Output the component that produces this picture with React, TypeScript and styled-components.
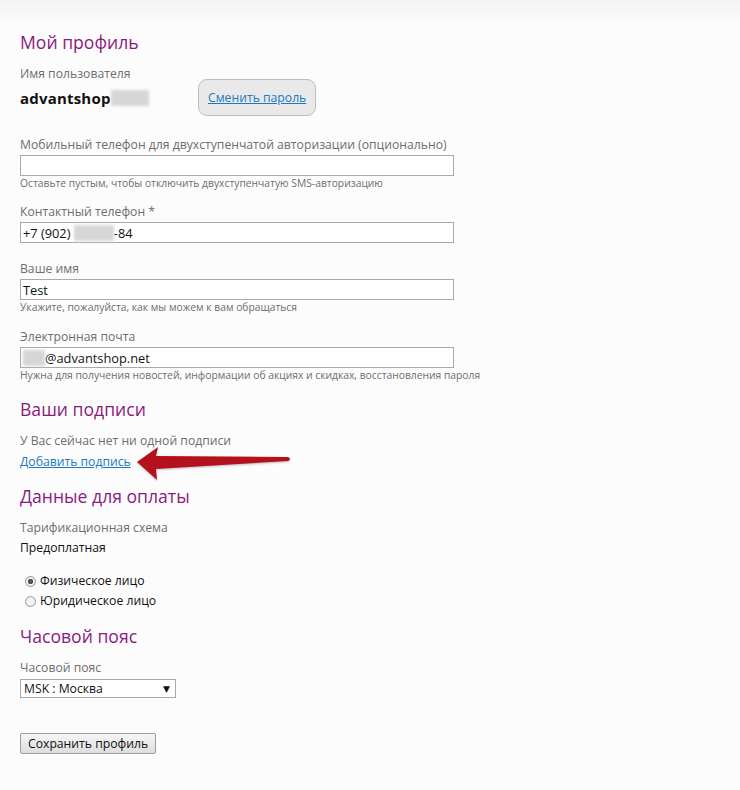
import React from 'react';
import styled, { createGlobalStyle } from 'styled-components';

const GlobalStyle = createGlobalStyle`
  html, body {
    margin: 0;
    padding: 0;
    background: #fcfcfc;
  }
  body {
    font-family: "Open Sans", "DejaVu Sans", sans-serif;
    color: #333;
  }
`;

const Page = styled.div`
  position: relative;
  width: 740px;
  min-height: 790px;
  background: linear-gradient(#f3f3f3 0px, #fcfcfc 24px, #fcfcfc 100%);
  padding: 29px 20px 36px;
  box-sizing: border-box;
`;

const Heading = styled.h2<{ $top?: number }>`
  margin: ${(p) => p.$top ?? 0}px 0 0;
  font-family: "Open Sans", sans-serif;
  font-size: 17.6px;
  font-weight: 400;
  line-height: 26px;
  color: #8b1a7f;
`;

const Label = styled.div<{ $top?: number }>`
  margin-top: ${(p) => p.$top ?? 0}px;
  font-size: 12.2px;
  line-height: 20px;
  color: #6e6e6e;
`;

const Hint = styled.div`
  margin-top: 1px;
  font-size: 10.3px;
  line-height: 13px;
  color: #6e6e6e;
`;

const Value = styled.div`
  font-size: 12.2px;
  line-height: 20px;
  color: #111;
`;

const UserRow = styled.div`
  display: flex;
  align-items: center;
  margin-top: -5px;
`;

const UserName = styled.div`
  display: flex;
  align-items: center;
  width: 178px;
  font-size: 15px;
  font-weight: 700;
  color: #111;
  letter-spacing: 0.2px;
`;

const Blur = styled.span<{ $w: number }>`
  display: inline-block;
  width: ${(p) => p.$w}px;
  height: 16px;
  background: #d6d6d6;
  filter: blur(1.5px);
  vertical-align: middle;
`;

const ChangeButton = styled.button`
  height: 37px;
  padding: 0 9px;
  border: 1px solid #bdbdbd;
  border-radius: 9px;
  background: #e9e9e9;
  font-family: inherit;
  font-size: 12.2px;
  color: #1a7ac4;
  text-decoration: underline;
  cursor: pointer;
`;

const Field = styled.div`
  display: flex;
  align-items: center;
  width: 434px;
  height: 21px;
  padding: 0 2px;
  box-sizing: border-box;
  border: 1px solid #a9a9a9;
  background: #fff;
  font-size: 12.8px;
  color: #111;
`;

const Link = styled.a`
  display: block;
  margin-top: 1px;
  font-size: 12.2px;
  line-height: 20px;
  color: #1a7ac4;
  text-decoration: underline;
  cursor: pointer;
`;

const RadioList = styled.div`
  display: flex;
  flex-direction: column;
  margin-top: 13px;
  padding-left: 5px;
`;

const RadioRow = styled.label`
  display: flex;
  align-items: center;
  gap: 4px;
  font-size: 12.2px;
  line-height: 20px;
  color: #111;
`;

const RadioDot = styled.span<{ $checked?: boolean }>`
  width: 11px;
  height: 11px;
  border-radius: 50%;
  border: 1px solid #9a9a9a;
  background: radial-gradient(circle, ${(p) => (p.$checked ? '#555 0 2.5px, ' : '')}#f4f4f4 3px, #d8d8d8 100%);
  box-sizing: border-box;
`;

const Select = styled.div`
  display: flex;
  align-items: center;
  justify-content: space-between;
  width: 156px;
  height: 19px;
  margin-top: 1px;
  padding: 0 5px 0 3px;
  box-sizing: border-box;
  border: 1px solid #a9a9a9;
  background: #fff;
  font-size: 12.2px;
  color: #111;
`;

const Caret = styled.span`
  font-size: 9px;
`;

const SaveButton = styled.button`
  margin-top: 35px;
  height: 21px;
  padding: 0 7px;
  border: 1px solid #9c9c9c;
  border-radius: 2px;
  background: linear-gradient(#f6f6f6, #dedede);
  font-family: inherit;
  font-size: 12.2px;
  color: #111;
  cursor: pointer;
`;

const Arrow = styled.svg`
  position: absolute;
  left: 130px;
  top: 442px;
`;

export default function App() {
  return (
    <Page>
      <GlobalStyle />
      <Heading>Мой профиль</Heading>
      <Label $top={9}>Имя пользователя</Label>
      <UserRow>
        <UserName>
          advantshop<Blur $w={38} />
        </UserName>
        <ChangeButton>Сменить пароль</ChangeButton>
      </UserRow>

      <Label $top={19}>Мобильный телефон для двухступенчатой авторизации (опционально)</Label>
      <Field />
      <Hint>Оставьте пустым, чтобы отключить двухступенчатую SMS-авторизацию</Hint>

      <Label $top={12}>Контактный телефон *</Label>
      <Field>
        +7 (902)&nbsp;<Blur $w={40} />
        -84
      </Field>

      <Label $top={16}>Ваше имя</Label>
      <Field>Test</Field>
      <Hint>Укажите, пожалуйста, как мы можем к вам обращаться</Hint>

      <Label $top={13}>Электронная почта</Label>
      <Field>
        <Blur $w={22} />
        @advantshop.net
      </Field>
      <Hint>Нужна для получения новостей, информации об акциях и скидках, восстановления пароля</Hint>

      <Heading $top={14}>Ваши подписи</Heading>
      <Label $top={9}>У Вас сейчас нет ни одной подписи</Label>
      <Link>Добавить подпись</Link>

      <Heading $top={11}>Данные для оплаты</Heading>
      <Label $top={9}>Тарификационная схема</Label>
      <Value>Предоплатная</Value>
      <RadioList>
        <RadioRow>
          <RadioDot $checked />
          Физическое лицо
        </RadioRow>
        <RadioRow>
          <RadioDot />
          Юридическое лицо
        </RadioRow>
      </RadioList>

      <Heading $top={12}>Часовой пояс</Heading>
      <Label $top={9}>Часовой пояс</Label>
      <Select>
        MSK : Москва
        <Caret>▼</Caret>
      </Select>
      <SaveButton>Сохранить профиль</SaveButton>

      <Arrow width="165" height="44" viewBox="0 0 165 44">
        <path
          d="M7 20 L28 5 L26 14 L158 15 Q162 17 158 19 L26 27 L27 38 Z"
          fill="#b5111c"
          style={{ filter: 'drop-shadow(0 1px 1px rgba(0,0,0,0.25))' }}
        />
      </Arrow>
    </Page>
  );
}
